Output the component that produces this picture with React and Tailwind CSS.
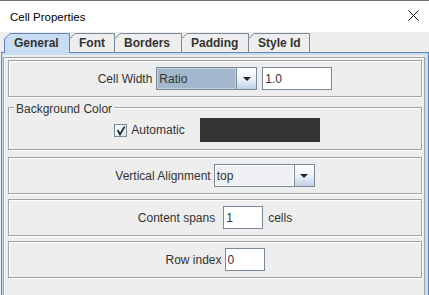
import React from 'react';

const tabs = [
  { label: 'General', w: 66, selected: true },
  { label: 'Font', w: 46 },
  { label: 'Borders', w: 68 },
  { label: 'Padding', w: 68 },
  { label: 'Style Id', w: 62 },
];

const Tab = ({ label, w, selected, first }) => {
  const h = selected ? 20 : 19;
  return (
    <div
      className={`relative flex items-center pl-[10px] font-bold ${selected ? 'z-10 h-[20px] -mb-px' : 'h-[19px]'} ${first ? '' : '-ml-px'}`}
      style={{ width: w }}
    >
      <div
        className={`absolute inset-0 [clip-path:polygon(0_6px,6px_0,100%_0,100%_100%,0_100%)] ${selected ? 'bg-[#c8ddf2]' : 'bg-[#eeeeee]'}`}
      />
      <svg className="absolute inset-0 overflow-visible" width={w} height={h}>
        <polyline
          points={`0.5,${h} 0.5,6 6,0.5 ${w - 0.5},0.5 ${w - 0.5},${h}`}
          fill="none"
          stroke={selected ? '#6382bf' : '#7a8a99'}
          strokeWidth="1"
        />
      </svg>
      <span className="relative">{label}</span>
    </div>
  );
};

const Arrow = () => (
  <div className="w-[20px] h-full border-l border-[#7a8a99] bg-linear-to-b from-white via-[#eef3f9] to-[#bdd1e6] flex items-center justify-center">
    <svg width="8" height="4" viewBox="0 0 8 4">
      <polygon points="0,0 8,0 4,4" fill="#222" />
    </svg>
  </div>
);

const Panel = ({ children }) => (
  <div className="h-[37px] border border-[#a3a3a3] shadow-[1px_1px_0_#fff,inset_1px_1px_0_#fff] flex items-center justify-center">
    {children}
  </div>
);

const Field = ({ value, className }) => (
  <div className={`h-[23px] border border-[#7a8a99] bg-white flex items-center pl-[2px] ${className}`}>
    {value}
  </div>
);

export default function App() {
  return (
    <div className="w-[429px] h-[295px] overflow-hidden bg-[#eeeeee] font-['Liberation_Sans',Arial,sans-serif] text-[12px] leading-[14px] text-[#333333]">
      {/* title bar */}
      <div className="h-[32px] bg-white border-t border-[#707070] flex items-center justify-between pl-[10px] pr-[10px]">
        <span className="text-[11.5px] text-black">Cell Properties</span>
        <svg className="-mt-[2px]" width="11" height="11" viewBox="0 0 11 11">
          <path d="M0.5 0.5 L10.5 10.5 M10.5 0.5 L0.5 10.5" stroke="#111" strokeWidth="1" />
        </svg>
      </div>

      {/* tabs */}
      <div className="h-[20px] flex items-end pl-[4px]">
        {tabs.map((t, i) => (
          <Tab key={t.label} {...t} first={i === 0} />
        ))}
      </div>

      {/* content */}
      <div className="pl-px">
        <div className="border-l border-t border-r border-[#6382bf]">
          <div className="border-l border-t-2 border-r-[3px] border-[#c8ddf2] pt-[2px]">
            <div className="h-[260px] border border-[#a3a3a3] shadow-[inset_1px_1px_0_#fff] pl-[4px] pr-[2px] pt-[2px] flex flex-col gap-[5px]">
              <Panel>
                <span>Cell Width</span>
                <div className="ml-[4px] flex w-[101px] h-[23px] border border-[#7a8a99]">
                  <div className="flex-1 flex items-center pl-[2px] bg-[#a3b8cc] shadow-[inset_0_0_0_1px_#c3d2e0]">Ratio</div>
                  <Arrow />
                </div>
                <Field value="1.0" className="ml-[5px] w-[70px]" />
              </Panel>

              <div className="relative pt-[5px] pb-[2px]">
                <div className="border border-[#a3a3a3] shadow-[1px_1px_0_#fff,inset_1px_1px_0_#fff] pt-[10px] pb-[7px] pl-[4px] flex items-center justify-center">
                  <div className="w-[13px] h-[13px] border border-[#7a8a99] bg-linear-to-br from-white to-[#d3e1ee] flex items-center justify-center">
                    <svg width="11" height="11" viewBox="0 0 11 11">
                      <path d="M2.6 5 L5 9.4 L9.6 1.6" fill="none" stroke="#222" strokeWidth="1.7" />
                    </svg>
                  </div>
                  <span className="ml-[4px]">Automatic</span>
                  <div className="ml-[15px] w-[120px] h-[24px] bg-[#333333]" />
                </div>
                <span className="absolute left-[6px] top-0 px-[2px] bg-[#eeeeee]">Background Color</span>
              </div>

              <Panel>
                <span>Vertical Alignment</span>
                <div className="ml-[3px] flex w-[101px] h-[23px] border border-[#7a8a99]">
                  <div className="flex-1 flex items-center pl-[2px] bg-[#eef0f3] shadow-[inset_0_0_0_1px_#fff]">top</div>
                  <Arrow />
                </div>
              </Panel>

              <Panel>
                <span>Content spans</span>
                <Field value="1" className="ml-[8px] w-[40px]" />
                <span className="ml-[5px]">cells</span>
              </Panel>

              <Panel>
                <span>Row index</span>
                <Field value="0" className="ml-[3px] w-[40px]" />
              </Panel>
            </div>
          </div>
        </div>
      </div>
    </div>
  );
}
